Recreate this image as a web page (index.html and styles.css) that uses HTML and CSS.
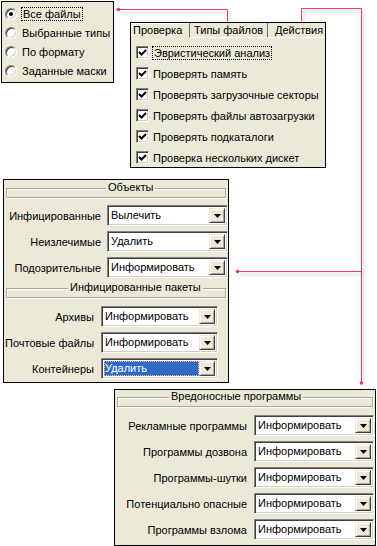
FILE: index.html
```html
<!DOCTYPE html>
<html lang="ru">
<head>
    <meta charset="UTF-8">
    <title>Настройки проверки</title>
    <link rel="stylesheet" href="styles.css">
</head>
<body>
    <div class="canvas">

        <div class="panel radio-panel">
            <div class="radio-item"><span class="radio checked"></span><span class="focus">Все файлы</span></div>
            <div class="radio-item"><span class="radio"></span><span>Выбранные типы</span></div>
            <div class="radio-item"><span class="radio"></span><span>По формату</span></div>
            <div class="radio-item"><span class="radio"></span><span>Заданные маски</span></div>
        </div>

        <div class="panel tabs-panel">
            <div class="tab-strip">
                <span class="tab tab-check active">Проверка</span>
                <span class="tab tab-types">Типы файлов</span>
                <span class="tab tab-actions">Действия</span>
            </div>
            <div class="tab-body">
                <div class="check-item"><span class="check"><svg viewBox="0 0 11 11"><polyline points="2,5 4.5,7.5 9,3"/></svg></span><span class="focus">Эвристический анализ</span></div>
                <div class="check-item"><span class="check"><svg viewBox="0 0 11 11"><polyline points="2,5 4.5,7.5 9,3"/></svg></span><span>Проверять память</span></div>
                <div class="check-item"><span class="check"><svg viewBox="0 0 11 11"><polyline points="2,5 4.5,7.5 9,3"/></svg></span><span>Проверять загрузочные секторы</span></div>
                <div class="check-item"><span class="check"><svg viewBox="0 0 11 11"><polyline points="2,5 4.5,7.5 9,3"/></svg></span><span>Проверять файлы автозагрузки</span></div>
                <div class="check-item"><span class="check"><svg viewBox="0 0 11 11"><polyline points="2,5 4.5,7.5 9,3"/></svg></span><span>Проверять подкаталоги</span></div>
                <div class="check-item"><span class="check"><svg viewBox="0 0 11 11"><polyline points="2,5 4.5,7.5 9,3"/></svg></span><span>Проверка нескольких дискет</span></div>
            </div>
        </div>

        <div class="panel objects-panel">
            <div class="group-head head-objects"><span>Объекты</span></div>
            <div class="rows rows-objects">
                <span class="label">Инфицированные</span>
                <div class="select"><span class="value">Вылечить</span><span class="drop"></span></div>
                <span class="label">Неизлечимые</span>
                <div class="select"><span class="value">Удалить</span><span class="drop"></span></div>
                <span class="label">Подозрительные</span>
                <div class="select"><span class="value">Информировать</span><span class="drop"></span></div>
            </div>
            <div class="group-head head-packs"><span>Инфицированные пакеты</span></div>
            <div class="rows rows-packs">
                <span class="label">Архивы</span>
                <div class="select"><span class="value">Информировать</span><span class="drop"></span></div>
                <span class="label">Почтовые файлы</span>
                <div class="select"><span class="value">Информировать</span><span class="drop"></span></div>
                <span class="label">Контейнеры</span>
                <div class="select"><span class="value selected">Удалить</span><span class="drop"></span></div>
            </div>
        </div>

        <div class="panel malware-panel">
            <div class="group-head head-malware"><span>Вредоносные программы</span></div>
            <div class="rows rows-malware">
                <span class="label">Рекламные программы</span>
                <div class="select"><span class="value">Информировать</span><span class="drop"></span></div>
                <span class="label">Программы дозвона</span>
                <div class="select"><span class="value">Информировать</span><span class="drop"></span></div>
                <span class="label">Программы-шутки</span>
                <div class="select"><span class="value">Информировать</span><span class="drop"></span></div>
                <span class="label">Потенциально опасные</span>
                <div class="select"><span class="value">Информировать</span><span class="drop"></span></div>
                <span class="label">Программы взлома</span>
                <div class="select"><span class="value">Информировать</span><span class="drop"></span></div>
            </div>
        </div>

        <!-- callout lines between the panels -->
        <svg class="connectors" width="377" height="546" viewBox="0 0 377 546">
            <defs>
                <filter id="shade" x="-10%" y="-10%" width="120%" height="120%">
                    <feDropShadow dx="2" dy="3" stdDeviation="1.5" flood-color="#000" flood-opacity="0.25"/>
                </filter>
            </defs>
            <g filter="url(#shade)" fill="none" stroke="#ee3a52" stroke-width="1">
                <path d="M118 9.5 H227.5 V21"/>
                <path d="M301.5 21 V8.5 H361.5 V383"/>
                <path d="M237 271.5 H361.5"/>
            </g>
            <g fill="#ee3a52">
                <circle cx="118.5" cy="9.5" r="1.8"/>
                <circle cx="361.5" cy="383" r="1.8"/>
                <circle cx="237.5" cy="271.5" r="1.8"/>
            </g>
        </svg>
    </div>
</body>
</html>
```

FILE: styles.css
```css
* {
    box-sizing: border-box;
}

body {
    margin: 0;
    background-color: #fff;
    font-family: 'Liberation Sans', Tahoma, Arial, sans-serif;
    font-size: 11px;
    color: #000;
}

.canvas {
    position: relative;
    width: 377px;
    height: 546px;
    overflow: hidden;
    background-color: #fff;
}

.panel {
    position: absolute;
    background-color: #ece9d8;
    border: 1px solid #000;
}

.focus {
    outline: 1px dotted #000;
    outline-offset: 0;
    padding: 0 1px;
}

/* radio group */
.radio-panel {
    left: 1px;
    top: 1px;
    width: 113px;
    height: 82px;
    padding: 2px 3px;
    display: flex;
    flex-direction: column;
}

.radio-item {
    display: flex;
    align-items: center;
    gap: 5px;
    height: 19px;
    white-space: nowrap;
}

.radio {
    position: relative;
    width: 12px;
    height: 12px;
    flex-shrink: 0;
    border-radius: 50%;
    background-color: #fff;
    border: 1px solid;
    border-color: #808080 #fff #fff #808080;
    box-shadow: inset 1px 1px #404040, inset -1px -1px #d4d0c8;
}

.radio.checked::after {
    content: '';
    position: absolute;
    left: 3px;
    top: 3px;
    width: 4px;
    height: 4px;
    border-radius: 50%;
    background-color: #000;
}

/* tab control */
.tabs-panel {
    left: 130px;
    top: 22px;
    width: 196px;
    height: 146px;
}

.tab-strip {
    display: flex;
    height: 15px;
}

.tab {
    height: 15px;
    line-height: 14px;
    padding: 0 2px;
    border-right: 1px solid #716f64;
    border-bottom: 1px solid #fff;
    white-space: nowrap;
}

.tab.active {
    border-bottom-color: #ece9d8;
    box-shadow: inset 1px 1px #fff;
}

.tab-check { width: 59px; }
.tab-types { width: 78px; padding-left: 4px; }
.tab-actions { width: 57px; padding-left: 7px; border-right: none; }

.tab-body {
    padding: 4px 5px;
}

.check-item {
    display: flex;
    align-items: center;
    gap: 4px;
    height: 21px;
    white-space: nowrap;
}

.check {
    width: 13px;
    height: 13px;
    flex-shrink: 0;
    background-color: #fff;
    border: 1px solid;
    border-color: #808080 #fff #fff #808080;
    box-shadow: inset 1px 1px #404040, inset -1px -1px #d4d0c8;
    padding: 0;
}

.check svg {
    display: block;
    width: 11px;
    height: 11px;
    fill: none;
    stroke: #000;
    stroke-width: 2;
}

/* group headers */
.group-head {
    position: relative;
    height: 10px;
    margin: 0 1px;
    border: 1px solid #aca899;
    box-shadow: inset 1px 1px #fff, 1px 1px #fff;
}

.group-head span {
    position: absolute;
    top: -8px;
    padding: 0 2px;
    background-color: #ece9d8;
    line-height: 13px;
    white-space: nowrap;
}

.head-objects { margin-top: 8px; }
.head-objects span { left: 99px; }
.head-packs { margin-top: 10px; }
.head-packs span { left: 61px; }
.head-malware { margin-top: 7px; }
.head-malware span { left: 51px; }

/* label + dropdown rows */
.rows {
    display: grid;
    row-gap: 5px;
    align-items: center;
    white-space: nowrap;
}

.rows .label {
    text-align: right;
}

.rows-objects {
    grid-template-columns: 96px 121px;
    column-gap: 6px;
    margin-top: 7px;
}

.rows-packs {
    grid-template-columns: 89px 117px;
    column-gap: 7px;
    margin-top: 8px;
}

.rows-malware {
    grid-template-columns: 131px 120px;
    column-gap: 7px;
    margin-top: 8px;
}

.select {
    display: flex;
    height: 21px;
    padding: 2px;
    background-color: #fff;
    border: 1px solid;
    border-color: #808080 #fff #fff #808080;
    box-shadow: inset 1px 1px #404040, inset -1px -1px #d4d0c8;
}

.select .value {
    flex: 1;
    line-height: 15px;
    padding-left: 1px;
}

.select .value.selected {
    background-color: #316ac5;
    color: #fff;
    outline: 1px dotted #f3c37a;
    outline-offset: -1px;
}

.select .drop {
    position: relative;
    width: 16px;
    height: 15px;
    background-color: #ece9d8;
    border: 1px solid;
    border-color: #ece9d8 #404040 #404040 #ece9d8;
    box-shadow: inset 1px 1px #fff, inset -1px -1px #aca899;
}

.select .drop::after {
    content: '';
    position: absolute;
    left: 4px;
    top: 5px;
    width: 7px;
    height: 4px;
    background-color: #000;
    clip-path: polygon(0 0, 100% 0, 50% 100%);
}

/* objects */
.objects-panel {
    left: 3px;
    top: 179px;
    width: 226px;
    height: 204px;
    padding: 0 1px;
}

.malware-panel {
    left: 114px;
    top: 389px;
    width: 262px;
    height: 157px;
    padding: 0 1px;
}

.connectors {
    position: absolute;
    left: 0;
    top: 0;
    pointer-events: none;
}
```
